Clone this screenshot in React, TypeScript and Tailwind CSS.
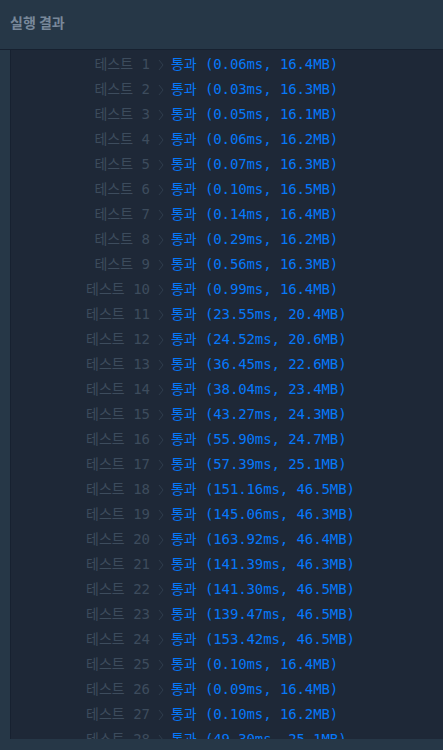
import React from "react";

const rows: [string, string][] = [
  ["0.06ms", "16.4MB"],
  ["0.03ms", "16.3MB"],
  ["0.05ms", "16.1MB"],
  ["0.06ms", "16.2MB"],
  ["0.07ms", "16.3MB"],
  ["0.10ms", "16.5MB"],
  ["0.14ms", "16.4MB"],
  ["0.29ms", "16.2MB"],
  ["0.56ms", "16.3MB"],
  ["0.99ms", "16.4MB"],
  ["23.55ms", "20.4MB"],
  ["24.52ms", "20.6MB"],
  ["36.45ms", "22.6MB"],
  ["38.04ms", "23.4MB"],
  ["43.27ms", "24.3MB"],
  ["55.90ms", "24.7MB"],
  ["57.39ms", "25.1MB"],
  ["151.16ms", "46.5MB"],
  ["145.06ms", "46.3MB"],
  ["163.92ms", "46.4MB"],
  ["141.39ms", "46.3MB"],
  ["141.30ms", "46.5MB"],
  ["139.47ms", "46.5MB"],
  ["153.42ms", "46.5MB"],
  ["0.10ms", "16.4MB"],
  ["0.09ms", "16.4MB"],
  ["0.10ms", "16.2MB"],
  ["49.30ms", "25.1MB"],
];

const mono = {
  fontFamily: '"DejaVu Sans Mono", "Noto Sans CJK KR", monospace',
};

export default function App() {
  return (
    <div className="w-[443px] h-[750px] bg-[#263747] flex flex-col overflow-hidden">
      <div className="h-[50px] shrink-0 border-b border-[#172130] flex items-start pt-[12px] pl-[10px]">
        <span
          className="text-[14px] font-bold text-[#78889a] leading-[20px]"
          style={{ fontFamily: '"Noto Sans CJK KR", "Noto Sans", sans-serif' }}
        >
          실행 결과
        </span>
      </div>
      <div className="flex-1 ml-[10px] mb-[11px] border-l border-[#172130] bg-[#1e2837] overflow-hidden pt-[2px]">
        {rows.map(([t, m], i) => (
          <div
            key={i}
            className="h-[25px] flex items-center text-[14px] leading-[25px] whitespace-pre"
            style={mono}
          >
            <div className="w-[139px] shrink-0 text-right text-[#3d4c5d]">
              테스트 {i + 1}
            </div>
            <div className="w-[21px] shrink-0 flex justify-center">
              <svg width="6" height="12" viewBox="0 0 6 12" fill="none">
                <path d="M1 1 L5 6 L1 11" stroke="#2f3d4d" strokeWidth="1" />
              </svg>
            </div>
            <div className="text-[#0678fa] tracking-[-0.1px]">
              통과 ({t}, {m})
            </div>
          </div>
        ))}
      </div>
    </div>
  );
}
